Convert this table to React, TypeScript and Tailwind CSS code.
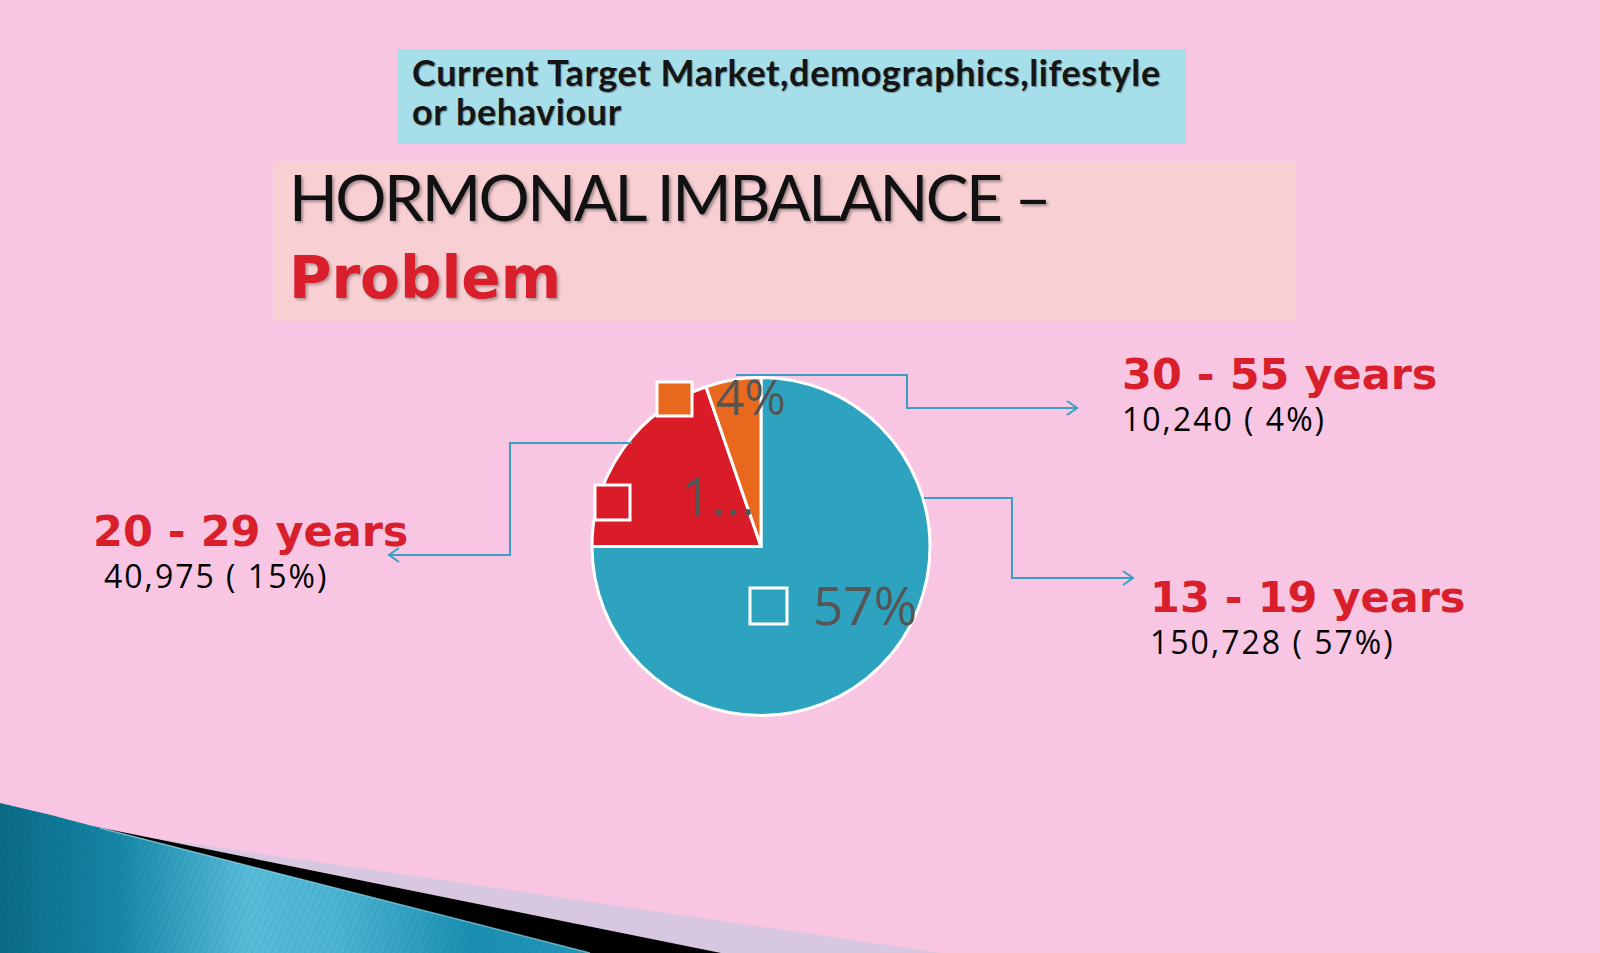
import React from "react";

const CX = 761;
const CY = 546.5;
const R = 169;
const TOP = 321; // chart area starts under the title box

function Swoosh() {
  return (
    <svg
      className="absolute left-0 bottom-0"
      width={1000}
      height={190}
      viewBox="0 763 1000 190"
    >
      <defs>
        <linearGradient id="teal" x1="0" y1="0" x2="1" y2="0">
          <stop offset="0" stopColor="#0a6a86" />
          <stop offset="0.2" stopColor="#1686a6" />
          <stop offset="0.42" stopColor="#58bcd9" />
          <stop offset="0.58" stopColor="#4cb3d2" />
          <stop offset="0.8" stopColor="#1a8fb2" />
          <stop offset="1" stopColor="#2297b8" />
        </linearGradient>
        <pattern id="stripes" width="6" height="6" patternUnits="userSpaceOnUse" patternTransform="rotate(25)">
          <line x1="0" y1="0" x2="0" y2="6" stroke="#003b50" strokeWidth="1.2" opacity="0.18" />
        </pattern>
      </defs>
      <polygon points="140,836 941,953 721,953" fill="#d8c7e0" />
      <polygon points="92,826 721,953 587,953" fill="#000000" />
      <path d="M0,803 Q50,814 100,828 L590,953 L0,953 Z" fill="url(#teal)" />
      <path d="M0,803 Q50,814 100,828 L590,953 L0,953 Z" fill="url(#stripes)" />
      <path d="M100,828 L590,953" stroke="#8fd6ea" strokeWidth="1.5" opacity="0.7" />
    </svg>
  );
}

function Arrow({ x, y, dir }: { x: number; y: number; dir: 1 | -1 }) {
  return (
    <polyline
      points={`${x - 10 * dir},${y - 7} ${x},${y} ${x - 10 * dir},${y + 7}`}
      fill="none"
      stroke="#3a9fc0"
      strokeWidth={2}
    />
  );
}

function Pie() {
  const pt = (deg: number) => {
    const a = (deg * Math.PI) / 180;
    return [CX + R * Math.sin(a), CY - R * Math.cos(a)];
  };
  const [ox, oy] = pt(341);
  return (
    <svg
      className="absolute left-0 top-0"
      width={1600}
      height={632}
      viewBox={`0 ${TOP} 1600 632`}
    >
      {/* slices */}
      <path
        d={`M${CX},${CY} L${CX},${CY - R} A${R},${R} 0 1 1 ${CX - R},${CY} Z`}
        fill="#2ea3c0"
        stroke="#fff"
        strokeWidth={3}
        strokeLinejoin="round"
      />
      <path
        d={`M${CX},${CY} L${CX - R},${CY} A${R},${R} 0 0 1 ${ox},${oy} Z`}
        fill="#d91c28"
        stroke="#fff"
        strokeWidth={3}
        strokeLinejoin="round"
      />
      <path
        d={`M${CX},${CY} L${ox},${oy} A${R},${R} 0 0 1 ${CX},${CY - R} Z`}
        fill="#e8681e"
        stroke="#fff"
        strokeWidth={3}
        strokeLinejoin="round"
      />

      {/* legend keys */}
      <rect x={657} y={382} width={35} height={34} fill="#e8681e" stroke="#fff" strokeWidth={3} />
      <rect x={595} y={485} width={35} height={35} fill="#d91c28" stroke="#fff" strokeWidth={3} />
      <rect x={750} y={588} width={37} height={36} fill="#2ea3c0" stroke="#fff" strokeWidth={3} />

      {/* data labels */}
      <g fill="#555555" fontFamily="'Open Sans', sans-serif">
        <text x={716} y={415} fontSize={50}>4%</text>
        <text x={681} y={515} fontSize={52} letterSpacing={1}>1...</text>
        <text x={813} y={625} fontSize={53}>57%</text>
      </g>

      {/* leader lines */}
      <g fill="none" stroke="#3a9fc0" strokeWidth={2}>
        <polyline points="736,375 907,375 907,408 1077,408" />
        <polyline points="632,443 510,443 510,555 389,555" />
        <polyline points="924,498 1012,498 1012,578 1133,578" />
      </g>
      <Arrow x={1077} y={408} dir={1} />
      <Arrow x={389} y={555} dir={-1} />
      <Arrow x={1133} y={578} dir={1} />
    </svg>
  );
}

function Callout({
  title,
  value,
  left,
  top,
  indent = 0,
}: {
  title: string;
  value: string;
  left: number;
  top: number;
  indent?: number;
}) {
  return (
    <div className="absolute flex flex-col" style={{ left, top: top - TOP }}>
      <span className="font-['DejaVu_Sans',sans-serif] font-bold text-[43px] leading-[43px] text-[#d91f2b] whitespace-nowrap">
        {title}
      </span>
      <span
        className="mt-[4px] font-['Open_Sans',sans-serif] text-[32px] leading-[38px] tracking-[2px] text-black whitespace-nowrap"
        style={{ marginLeft: indent }}
      >
        {value}
      </span>
    </div>
  );
}

export default function App() {
  return (
    <div className="relative w-[1600px] h-[953px] overflow-hidden bg-[#f8c6e3]">
      <Swoosh />
      <div className="relative flex flex-col h-full">
        <div className="ml-[398px] mt-[49px] w-[788px] h-[95px] bg-[#a6deea] pl-[14px] pt-[4px]">
          <p className="font-['Lato',sans-serif] font-bold text-[36px] leading-[39px] tracking-[0.6px] text-[#151515] [text-shadow:1px_1px_1px_rgba(0,0,0,0.35)]">
            Current Target Market,demographics,lifestyle
            <br />
            or behaviour
          </p>
        </div>
        <div className="ml-[273px] mt-[17px] w-[1023px] h-[160px] bg-[#f8d0d4] pl-[16px]">
          <div className="font-['Lato',sans-serif] text-[64px] leading-[72px] tracking-[-2.5px] text-[#111] [text-shadow:2px_2px_3px_rgba(0,0,0,0.35)] whitespace-nowrap">
            HORMONAL IMBALANCE –
          </div>
          <div className="mt-[7px] font-['DejaVu_Sans',sans-serif] font-bold text-[58px] leading-[76px] text-[#d91f2b] [text-shadow:2px_2px_3px_rgba(0,0,0,0.3)]">
            Problem
          </div>
        </div>
        <div className="relative flex-1">
          <Pie />
          <Callout title="30 - 55 years" value="10,240 ( 4%)" left={1122} top={353} />
          <Callout title="20 - 29 years" value="40,975 ( 15%)" left={93} top={510} indent={11} />
          <Callout title="13 - 19 years" value="150,728 ( 57%)" left={1150} top={576} />
        </div>
      </div>
    </div>
  );
}
